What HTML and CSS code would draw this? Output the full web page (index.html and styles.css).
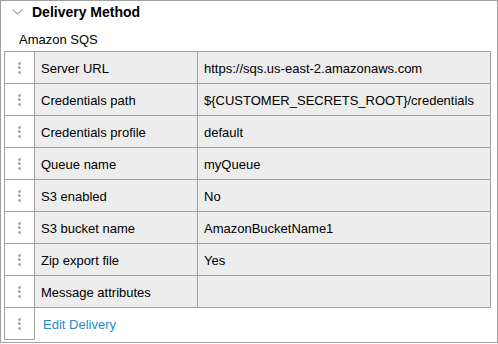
FILE: index.html
```html
<!DOCTYPE html>
<html>
<head>
<meta charset="utf-8">
<link rel="stylesheet" href="styles.css">
</head>
<body>
<div class="panel">
  <div class="header">
    <svg class="chevron" width="11" height="6" viewBox="0 0 11 6"><path d="M0.5 0.5 L5.5 5 L10.5 0.5" fill="none" stroke="#a8a8a8" stroke-width="1.2"/></svg>
    <span class="title">Delivery Method</span>
  </div>
  <div class="subtitle">Amazon SQS</div>
  <div class="tbl">
    <div class="row"><div class="drag"><span class="dots"><i></i><i></i><i></i></span></div><div class="cell">Server URL</div><div class="cell last">https://sqs.us-east-2.amazonaws.com</div></div>
    <div class="row"><div class="drag"><span class="dots"><i></i><i></i><i></i></span></div><div class="cell">Credentials path</div><div class="cell last">${CUSTOMER_SECRETS_ROOT}/credentials</div></div>
    <div class="row"><div class="drag"><span class="dots"><i></i><i></i><i></i></span></div><div class="cell">Credentials profile</div><div class="cell last">default</div></div>
    <div class="row"><div class="drag"><span class="dots"><i></i><i></i><i></i></span></div><div class="cell">Queue name</div><div class="cell last">myQueue</div></div>
    <div class="row"><div class="drag"><span class="dots"><i></i><i></i><i></i></span></div><div class="cell">S3 enabled</div><div class="cell last">No</div></div>
    <div class="row"><div class="drag"><span class="dots"><i></i><i></i><i></i></span></div><div class="cell">S3 bucket name</div><div class="cell last">AmazonBucketName1</div></div>
    <div class="row"><div class="drag"><span class="dots"><i></i><i></i><i></i></span></div><div class="cell">Zip export file</div><div class="cell last">Yes</div></div>
    <div class="row"><div class="drag"><span class="dots"><i></i><i></i><i></i></span></div><div class="cell">Message attributes</div><div class="cell last"></div></div>
  </div>
  <div class="editrow">
    <div class="drag editdrag"><span class="dots"><i></i><i></i><i></i></span></div>
    <a class="edit" href="#">Edit Delivery</a>
  </div>
</div>
</body>
</html>
```
FILE: styles.css
```css
html, body {
  margin: 0;
  padding: 0;
  background: #fff;
}
body {
  font-family: "Liberation Sans", Arial, sans-serif;
  font-size: 13px;
  color: #000;
}
.panel {
  width: 498px;
  height: 343px;
  box-sizing: border-box;
  border: 1px solid #a0a0a0;
}
.header {
  display: flex;
  align-items: center;
  height: 22px;
}
.chevron {
  margin-left: 11px;
  margin-top: -1px;
}
.title {
  margin-left: 9px;
  font-weight: bold;
  font-size: 14px;
  line-height: 22px;
}
.subtitle {
  padding: 9px 0 3px 18px;
  line-height: 16px;
}
.tbl {
  margin-left: 3px;
  width: 487px;
  border-top: 1px solid #a0a0a0;
  border-bottom: 1px solid #a0a0a0;
}
.row {
  display: grid;
  grid-template-columns: 30px 163px 294px;
  height: 31px;
}
.row + .row {
  border-top: 1px solid #a0a0a0;
}
.drag {
  border-left: 1px solid #a0a0a0;
  background: #fff;
  display: flex;
  align-items: center;
  justify-content: center;
}
.dots {
  display: flex;
  flex-direction: column;
  gap: 1.5px;
}
.dots i {
  display: block;
  width: 3px;
  height: 3px;
  border-radius: 50%;
  background: #a8a8a8;
}
.cell {
  border-left: 1px solid #a0a0a0;
  background: #ededed;
  padding: 2px 0 0 6px;
  line-height: 29px;
  white-space: nowrap;
  overflow: hidden;
}
.cell.last {
  border-right: 1px solid #a0a0a0;
}
.editrow {
  display: flex;
  margin-left: 3px;
  height: 32px;
}
.editdrag {
  width: 31px;
  box-sizing: border-box;
  border-right: 1px solid #a0a0a0;
  border-bottom: 1px solid #a0a0a0;
}
.edit {
  color: #1f8ad2;
  text-decoration: none;
  padding: 2px 0 0 8px;
  line-height: 29px;
}
```
